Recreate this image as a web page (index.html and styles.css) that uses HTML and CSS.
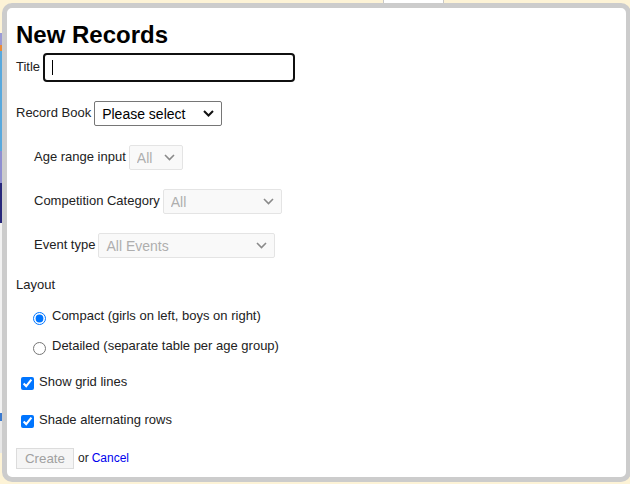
FILE: index.html
```html
<!DOCTYPE html>
<html>
<head>
<meta charset="utf-8">
<link rel="stylesheet" href="styles.css">
</head>
<body>
<div class="page">
  <div class="page-tab"></div>
  <div class="page-strip"></div>
</div>
<div class="dialog">
  <h1 class="title">New Records</h1>
  <div class="row row-title">
    <label class="lbl" for="t">Title</label>
    <span class="input-wrap">
      <input id="t" class="text-input" type="text">
      <span class="caret"></span>
    </span>
  </div>
  <div class="row row-gap">
    <label class="lbl">Record Book</label>
    <span class="sel-wrap">
      <select class="sel sel-book"><option>Please select</option></select>
      <svg class="chev" width="11" height="7" viewBox="0 0 11 7"><path d="M1 1 L5.5 5.5 L10 1" fill="none" stroke="#111" stroke-width="2"/></svg>
    </span>
  </div>
  <div class="row row-gap sub">
    <label class="lbl">Age range input</label>
    <span class="sel-wrap">
      <select class="sel sel-dis sel-age" disabled><option>All</option></select>
      <svg class="chev" width="11" height="7" viewBox="0 0 11 7"><path d="M1 1 L5.5 5.5 L10 1" fill="none" stroke="#8a8a8a" stroke-width="1.6"/></svg>
    </span>
  </div>
  <div class="row row-gap sub">
    <label class="lbl">Competition Category</label>
    <span class="sel-wrap">
      <select class="sel sel-dis sel-comp" disabled><option>All</option></select>
      <svg class="chev" width="11" height="7" viewBox="0 0 11 7"><path d="M1 1 L5.5 5.5 L10 1" fill="none" stroke="#8a8a8a" stroke-width="1.6"/></svg>
    </span>
  </div>
  <div class="row row-gap sub">
    <label class="lbl">Event type</label>
    <span class="sel-wrap">
      <select class="sel sel-dis sel-event" disabled><option>All Events</option></select>
      <svg class="chev" width="11" height="7" viewBox="0 0 11 7"><path d="M1 1 L5.5 5.5 L10 1" fill="none" stroke="#8a8a8a" stroke-width="1.6"/></svg>
    </span>
  </div>
  <div class="section-label">Layout</div>
  <label class="opt radio-opt first-radio"><input type="radio" name="l" checked><span>Compact (girls on left, boys on right)</span></label>
  <label class="opt radio-opt second-radio"><input type="radio" name="l"><span>Detailed (separate table per age group)</span></label>
  <label class="opt check-opt first-check"><input type="checkbox" checked><span>Show grid lines</span></label>
  <label class="opt check-opt second-check"><input type="checkbox" checked><span>Shade alternating rows</span></label>
  <div class="actions">
    <button class="btn" disabled>Create</button>
    <span class="or">or</span>
    <a class="cancel" href="#">Cancel</a>
  </div>
</div>
</body>
</html>
```
FILE: styles.css
```css
html, body {
  margin: 0;
  padding: 0;
}
body {
  width: 630px;
  height: 484px;
  overflow: hidden;
  background: #fdf3d6;
  font-family: "Liberation Sans", Arial, sans-serif;
  color: #222;
}
.page {
  position: relative;
  width: 630px;
  height: 484px;
}
.page-tab {
  position: absolute;
  left: 383px;
  top: 0;
  width: 59px;
  height: 4px;
  background: #fff;
  border-left: 1px solid #c8c8c8;
  border-right: 1px solid #c8c8c8;
}
.page-strip {
  position: absolute;
  left: 0;
  top: 33px;
  width: 3px;
  height: 420px;
  background: linear-gradient(to bottom,
    #9b9bd6 0px, #9b9bd6 12px,
    #e98a3a 12px, #e98a3a 18px,
    #58a8dc 18px, #58a8dc 118px,
    #8e8ed0 118px, #8e8ed0 150px,
    #26267a 150px, #26267a 190px,
    #f2f2f2 190px, #f2f2f2 380px,
    #3a7ad0 380px, #3a7ad0 388px,
    #e8e8e8 388px, #e8e8e8 420px);
}
.dialog {
  position: absolute;
  left: 2px;
  top: 3px;
  width: 610px;
  height: 459px;
  background: #fff;
  border: 5px solid #cccccc;
  border-radius: 10px;
  padding: 10px 0 0 9px;
  display: flex;
  flex-direction: column;
  align-items: flex-start;
}
.title {
  margin: 3px 0 0 0;
  font-size: 24px;
  line-height: 28px;
  font-weight: bold;
  color: #000;
}
.row {
  display: flex;
  align-items: center;
  gap: 2px;
}
.row-title {
  margin-top: 4px;
}
.row-gap {
  margin-top: 19px;
}
.sub {
  padding-left: 18px;
}
.lbl {
  font-size: 13px;
  line-height: 15px;
  color: #222;
  margin-top: -2px;
  margin-right: 1px;
}
.input-wrap {
  position: relative;
  display: inline-flex;
}
.text-input {
  box-sizing: border-box;
  width: 252px;
  height: 29px;
  border: 2px solid #101010;
  border-radius: 4px;
  padding: 0 7px;
  font-family: "Liberation Sans", Arial, sans-serif;
  font-size: 14px;
  outline: none;
  margin: 0;
}
.caret {
  position: absolute;
  left: 9px;
  top: 7px;
  width: 1px;
  height: 15px;
  background: #000;
}
.sel-wrap {
  position: relative;
  display: inline-flex;
}
.sel {
  box-sizing: border-box;
  appearance: none;
  -webkit-appearance: none;
  height: 25px;
  margin: 0;
  font-family: "Liberation Sans", Arial, sans-serif;
  font-size: 14px;
  border: 1px solid #767676;
  border-radius: 2px;
  background-color: #fff;
  color: #000;
  padding: 0 24px 0 7px;
}
.chev {
  position: absolute;
  right: 8px;
  top: 9px;
  pointer-events: none;
}
.sel-book { width: 128px; }
.sel-dis {
  background-color: #f7f7f7;
  border-color: #d9d9d9;
  color: #8c8c8c;
}
.sel-age { width: 54px; }
.sel-comp { width: 119px; }
.sel-event { width: 177px; }
.section-label {
  margin-top: 19px;
  font-size: 13px;
  line-height: 15px;
}
.opt {
  display: flex;
  align-items: center;
  font-size: 13px;
  line-height: 20px;
  height: 20px;
  color: #222;
}
.opt input {
  margin: 0;
  width: 13px;
  height: 13px;
}
.radio-opt {
  padding-left: 17px;
}
.radio-opt input {
  margin-right: 6px;
  margin-top: 2px;
}
.radio-opt span {
  margin-top: -2px;
}
.check-opt {
  padding-left: 5px;
}
.check-opt input {
  margin-right: 5px;
  margin-top: 1px;
}
.check-opt span {
  margin-top: -2px;
}
.first-radio { margin-top: 15px; }
.second-radio { margin-top: 10px; }
.first-check { margin-top: 16px; }
.second-check { margin-top: 18px; }
.actions {
  margin-top: 17px;
  display: flex;
  align-items: center;
  gap: 4px;
}
.btn {
  box-sizing: border-box;
  height: 21px;
  width: 58px;
  margin: 0;
  padding: 0 6px;
  font-family: "Liberation Sans", Arial, sans-serif;
  font-size: 13.33px;
  background: #f5f5f5;
  border: 1px solid #dcdcdc;
  border-radius: 0;
  color: #a0a0a0;
}
.or {
  font-size: 12px;
  color: #222;
  margin-top: -2px;
}
.cancel {
  font-size: 12px;
  color: #0000ee;
  text-decoration: none;
  margin-top: -2px;
  margin-left: -1px;
}
```
